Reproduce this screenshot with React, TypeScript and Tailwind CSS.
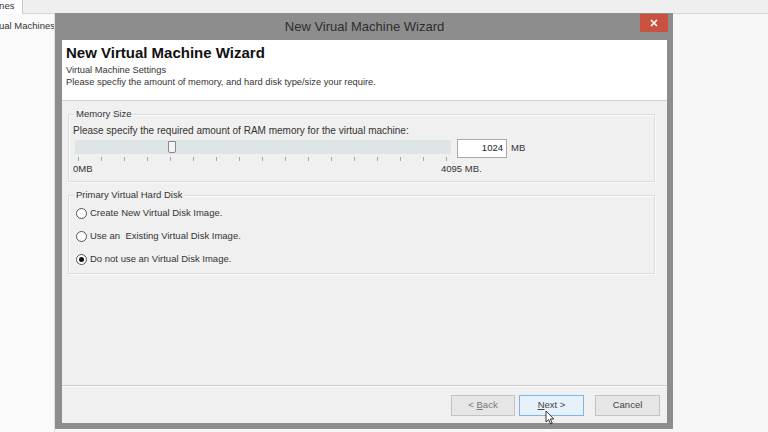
import React from "react";

const font = { fontFamily: '"Liberation Sans", Arial, sans-serif' };

function GroupBox({ label, className, children }: { label: string; className?: string; children: React.ReactNode }) {
  return (
    <div className={`relative border border-[#dcdcdc] shadow-[inset_1px_1px_0_#fafafa,1px_1px_0_#fafafa] ${className ?? ""}`}>
      <span className="absolute -top-[7px] left-[5px] bg-[#f0f0f0] px-[2px] text-[9.5px] leading-[12px] text-[#333]">
        {label}
      </span>
      {children}
    </div>
  );
}

function Radio({ checked, label }: { checked?: boolean; label: string }) {
  return (
    <div className="flex items-center gap-[3px] h-[14px]">
      <span className="w-[11px] h-[11px] rounded-full border border-[#555] bg-white flex items-center justify-center">
        {checked && <span className="w-[5px] h-[5px] rounded-full bg-[#111]" />}
      </span>
      <span className="text-[9.5px] text-[#333] whitespace-pre">{label}</span>
    </div>
  );
}

function Btn({ children, active }: { children: React.ReactNode; active?: boolean }) {
  return (
    <div
      className={`h-[21px] flex items-center justify-center text-[9.5px] text-[#444] border ${
        active ? "border-[#7eb4ea] bg-[#e5f1fb]" : "border-[#c3c3c3] bg-[#e6e6e6]"
      }`}
    >
      {children}
    </div>
  );
}

export default function App() {
  const ticks = Array.from({ length: 17 });

  return (
    <div className="relative w-[768px] h-[432px] overflow-hidden bg-[#f7f7f7]" style={font}>
      {/* BACKGROUND APP */}
      <div className="flex flex-col h-full">
        <div className="h-[14px] flex border-b border-[#d6d6d6] bg-[#efefef]">
          <div className="w-[23px] h-[14px] border-r border-[#c8c8c8] bg-white text-[9.5px] leading-[12px] text-[#333] overflow-hidden">
            <span className="block -ml-[3px]">ines</span>
          </div>
        </div>
        <div className="flex flex-1">
          <div className="w-[55px] bg-[#fafafa] border-r border-[#dedede] pt-[5px] overflow-hidden">
            <span className="block whitespace-nowrap text-[9.5px] text-[#333] -ml-[1px]">ual Machines</span>
          </div>
          <div className="flex-1" />
        </div>
      </div>

      {/* WIZARD WINDOW */}
      <div className="absolute left-[55px] top-[13px] w-[618px] h-[416px] bg-[#8d8d8d] flex flex-col px-[7px] pr-[6px] pb-[6px]">
        <div className="h-[27px] relative flex items-center justify-center">
          <span className="text-[13px] text-[#2e2e2e]">New Virual Machine Wizard</span>
          <div className="absolute right-[-1px] top-[1px] w-[28px] h-[18px] bg-[#c9513f] flex items-center justify-center">
            <svg width="8" height="8" viewBox="0 0 8 8">
              <path d="M1 1L7 7M7 1L1 7" stroke="white" strokeWidth="1.6" />
            </svg>
          </div>
        </div>

        <div className="flex-1 flex flex-col bg-[#f0f0f0]">
          {/* HEADER */}
          <div className="h-[61px] bg-white border-b border-[#d0d0d0] pl-[4px] pt-[4px]">
            <div className="text-[15px] font-bold text-[#111] leading-[18px]">New Virtual Machine Wizard</div>
            <div className="text-[9.3px] text-[#333] leading-[12px] mt-[2px]">Virtual Machine Settings</div>
            <div className="text-[9.3px] text-[#333] leading-[12px]">
              Please specfiy the amount of memory, and hard disk type/size your require.
            </div>
          </div>

          {/* BODY */}
          <div className="flex-1 flex flex-col pl-[6px] pr-[12px] pt-[13px] gap-[13px]">
            <GroupBox label="Memory Size" className="h-[68px] pl-[4px] pt-[10px]">
              <div className="text-[10px] text-[#333] leading-[12px]">
                Please specify the required amount of RAM memory for the virtual machine:
              </div>
              <div className="flex items-start gap-[6px] mt-[3px]">
                <div className="w-[378px] shrink-0 flex flex-col">
                  <div className="relative h-[14px] bg-[#dde5e7] ml-[2px]">
                    <div className="absolute left-[93px] top-[1px] w-[8px] h-[12px] bg-[#f4f4f4] border border-[#8a8a8a] rounded-b-[2px]" />
                  </div>
                  <div className="flex justify-between h-[8px] items-center pl-[5px] pr-[4px] mt-[1px]">
                    {ticks.map((_, i) => (
                      <span key={i} className="w-px h-[4px] bg-[#a8a8a8]" />
                    ))}
                  </div>
                  <div className="flex text-[9.5px] text-[#333] leading-[12px] whitespace-nowrap">
                    <span className="w-[368px] shrink-0">0MB</span>
                    <span className="shrink-0">4095 MB.</span>
                  </div>
                </div>
                <div className="flex items-center gap-[4px] -mt-[1px]">
                  <div className="w-[50px] h-[19px] bg-white border border-[#a9a9a9] text-[9.5px] text-[#222] flex items-center justify-end pr-[3px]">
                    1024
                  </div>
                  <span className="text-[9.5px] text-[#333]">MB</span>
                </div>
              </div>
            </GroupBox>

            <GroupBox label="Primary Virtual Hard Disk" className="h-[79px] pl-[7px] pt-[10px] flex flex-col gap-[9px]">
              <Radio label="Create New Virtual Disk Image." />
              <Radio label="Use an  Existing Virtual Disk Image." />
              <Radio checked label="Do not use an Virtual Disk Image." />
            </GroupBox>
          </div>

          {/* FOOTER */}
          <div className="h-[38px] border-t border-[#cacaca] shadow-[inset_0_1px_0_#fdfdfd] flex items-start pt-[9px] pl-[389px] gap-[4px]">
            <div className="w-[64px]">
              <Btn>
                <span className="text-[#777]">
                  &lt; <u>B</u>ack
                </span>
              </Btn>
            </div>
            <div className="w-[65px] relative">
              <Btn active>
                <span>
                  <u>N</u>ext &gt;
                </span>
              </Btn>
              <svg className="absolute left-[26px] top-[15px]" width="10" height="15" viewBox="0 0 10 15">
                <path d="M1 1V12L3.6 9.6L5.6 14L7.2 13.3L5.3 9H8.8Z" fill="white" stroke="#222" strokeWidth="0.9" />
              </svg>
            </div>
            <div className="w-[65px] ml-[7px]">
              <Btn>Cancel</Btn>
            </div>
          </div>
        </div>
      </div>
    </div>
  );
}
